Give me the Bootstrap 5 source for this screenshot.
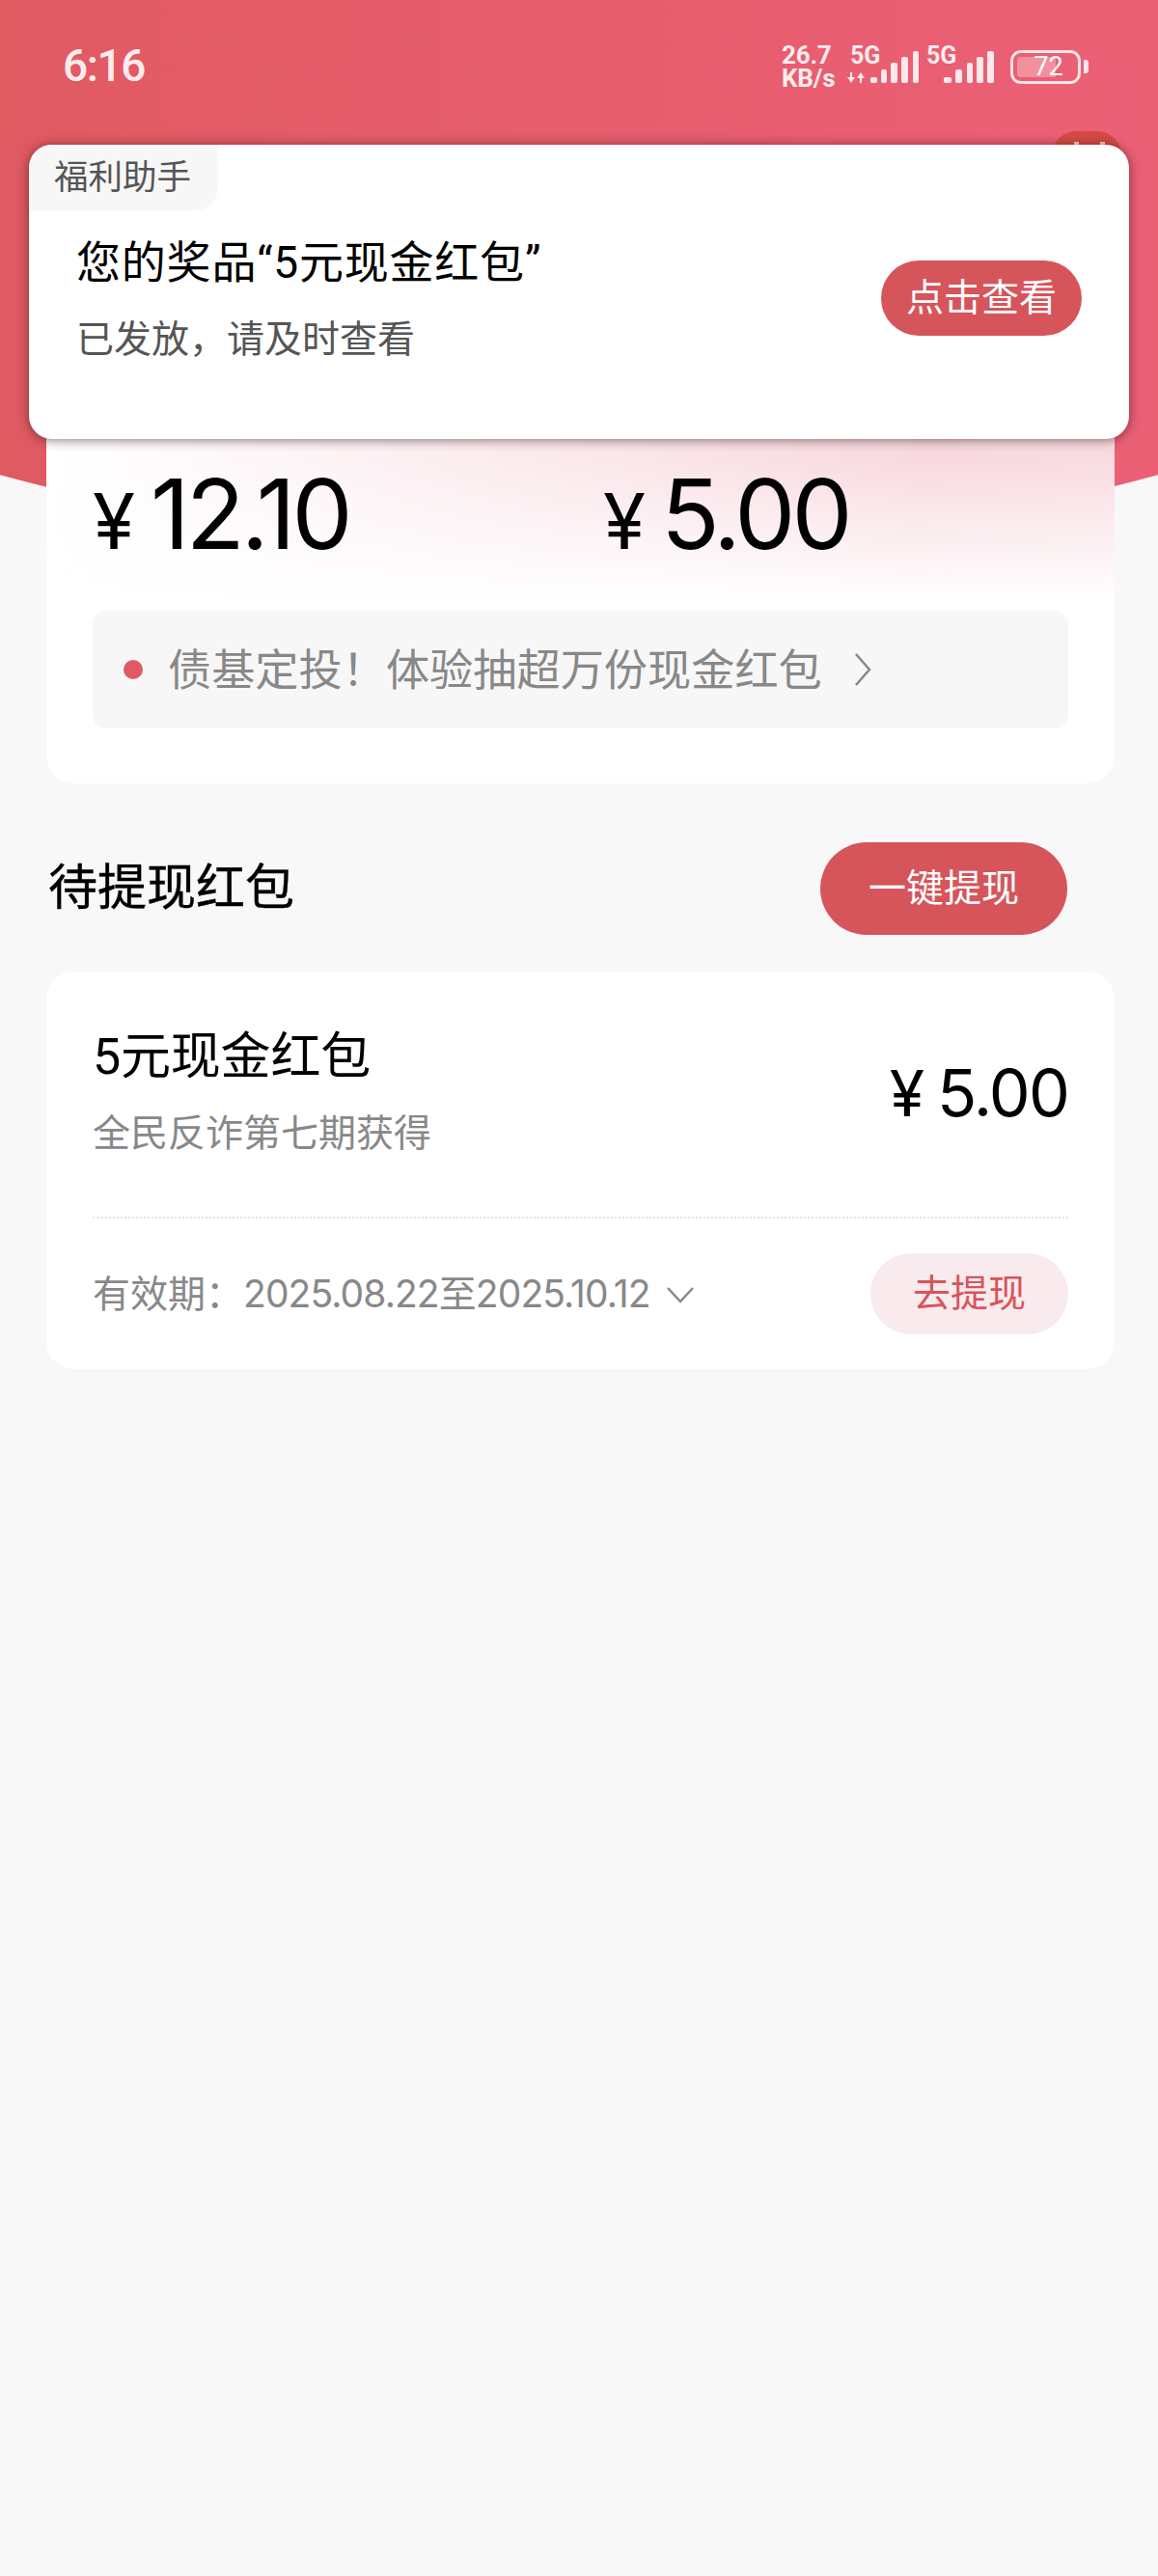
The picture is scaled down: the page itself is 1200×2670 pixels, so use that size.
<!DOCTYPE html>
<html lang="zh-CN">
<head>
  <meta charset="UTF-8" />
  <meta name="viewport" content="width=device-width, initial-scale=1.0" />
  <title>待提现红包</title>
  <link href="https://cdn.jsdelivr.net/npm/bootstrap@5.3.0/dist/css/bootstrap.min.css" rel="stylesheet">
  <style>
    body { background: #f8f8f8; font-family: Roboto, "Noto Sans CJK SC", sans-serif; }
    .page-wrap { position: relative; width: 1200px; min-height: 2670px; overflow: hidden; }

    /* red header behind everything */
    .hero-bg { position: absolute; left: 0; top: 0; width: 1200px; height: 560px;
      background: linear-gradient(90deg, #e05a62, #ec6076);
      clip-path: circle(2300px at 600px -1728px); }
    .hidden-badge { position: absolute; left: 1090px; top: 136px; width: 72px; height: 50px;
      border-radius: 25px; background: #d64a45; }
    .hidden-badge i { position: absolute; top: 11px; width: 5px; height: 6px; background: #f6d5d2; }
    .hidden-badge i:first-child { left: 23px; }
    .hidden-badge i:last-child { left: 50px; }

    .status-row { position: relative; height: 136px; padding: 0 72px 0 65px; color: #fdecee; }
    .clock { font-size: 46px; font-weight: 500; line-height: 1; margin-top: 45px; letter-spacing: -1.4px; }
    .status-icons { position: relative; width: 320px; height: 40px; margin-top: 48px; }
    .net-speed { position: absolute; left: 2px; top: -3px; font-size: 26px; font-weight: 700; line-height: 24px; letter-spacing: -.2px; }
    .net-tag { position: absolute; top: -2px; font-size: 25px; font-weight: 700; line-height: 24px; letter-spacing: -.2px; }
    .batt-box { position: absolute; left: 239px; top: 4px; width: 73px; height: 35px; border: 3px solid #fde3e7; border-radius: 11px; }
    .batt-fill { position: absolute; left: 4px; top: 4px; bottom: 4px; width: 40px; background: #f2909e; border-radius: 4px 0 0 4px; }
    .batt-num { position: absolute; left: 6px; right: 0; top: 1px; text-align: center; font-size: 27px; line-height: 27px; color: #fff; }
    .batt-nib { position: absolute; left: 315px; top: 14px; width: 5px; height: 14px; background: #fde3e7; border-radius: 0 3px 3px 0; }

    /* notification */
    .notice-pop { position: absolute; left: 30px; top: 150px; width: 1140px; height: 305px; background: #fff;
      border-radius: 24px; box-shadow: 0 1px 12px rgba(50, 20, 20, .6); overflow: hidden; z-index: 5; }
    .notice-tag { width: 196px; height: 68px; padding: 14px 0 0 26px; background: #f7f7f7; border-bottom-right-radius: 24px;
      font-size: 35.5px; line-height: 40px; color: #555; }
    .notice-title { position: absolute; left: 49px; top: 94px; font-size: 46px; line-height: 56px; color: #000; letter-spacing: .8px; }
    .notice-sub { position: absolute; left: 49px; top: 176px; font-size: 39px; line-height: 52px; color: #555; }
    .notice-btn { position: absolute; left: 883px; top: 120px; width: 208px; height: 78px; }

    .red-btn { background: #d6555b; color: #fff; border: 0; padding: 0; font-size: 39px; line-height: 1; }
    .red-btn:hover { background: #d6555b; color: #fff; }

    /* cards */
    .sheet { position: relative; margin: 0 45px 0 48px; border: 0; border-radius: 28px; background: #fff; }
    .sheet-top { margin-top: 264px; height: 412px; padding: 0 48px;
      background: linear-gradient(180deg, rgba(255,255,255,0) 70px, #fff 225px),
                  linear-gradient(100deg, #fff 2%, #f8d8de 78%, #f8dbe1 100%); }
    .amount-line { height: 233px; padding-top: 83px; font-family: Inter, Roboto, sans-serif; }
    .amount-cell { flex: none; width: 529px; }
    .yen-big { font-size: 80px; line-height: 100px; margin-right: 16px; color: #000; }
    .num-big { font-size: 100px; line-height: 100px; letter-spacing: -4px; color: #000; }
    .promo-bar { height: 122px; background: #f7f7f7; border-radius: 14px; padding-left: 32px; color: #888; font-size: 45.2px; }
    .promo-text { padding-top: 4px; }
    .promo-dot { width: 20px; height: 20px; border-radius: 50%; background: #e05a66; margin-right: 26px; }
    .promo-chev { margin-left: 30px; }

    .section-head { margin: 61px 94px 38px 50px; }
    .section-title { font-size: 51px; line-height: 60px; color: #000; margin: 0; font-weight: 400; -webkit-text-stroke: .4px #000; }
    .section-btn { width: 256px; height: 96px; }

    .sheet-item { height: 412px; padding: 0 48px; }
    .item-top { height: 256px; padding-top: 57px; border-bottom: 2px dotted #e4e4e4; }
    .item-name { font-size: 52px; line-height: 64px; color: #000; letter-spacing: -.2px; }
    .item-src { font-size: 39px; line-height: 52px; color: #888; margin-top: 21px; }
    .item-amt { margin-top: 33px; color: #000; line-height: 70px; font-family: Inter, Roboto, sans-serif; }
    .yen-mid { font-size: 66px; margin-right: 13px; }
    .num-mid { font-size: 68px; letter-spacing: -1.8px; }
    .item-bottom { height: 154px; padding-top: 36px; }
    .item-date { font-size: 39px; line-height: 84px; color: #888; }
    .date-nums { font-family: Inter, Roboto, "Noto Sans CJK SC", sans-serif; letter-spacing: -.9px; }
    .pale-btn { width: 205px; height: 84px; background: #f9eaed; color: #d6555b; border: 0; padding: 0; font-size: 39px; line-height: 1; }
    .pale-btn:hover { background: #f9eaed; color: #d6555b; }
  </style>
</head>
<body>
  <div class="page-wrap">
    <div class="hero-bg"></div>
    <div class="hidden-badge"><i></i><i></i></div>

    <div class="status-row d-flex justify-content-between align-items-start">
      <div class="clock">6:16</div>
      <div class="status-icons">
        <div class="net-speed">26.7<br>KB/s</div>
        <span class="net-tag" style="left:73px">5G</span>
        <svg width="90" height="42" viewBox="0 0 90 42" style="position:absolute;left:70px;top:0" fill="#fde8ec">
          <path d="M3 27h2v5h3l-4 6-4-6h3zM14 27l4 6h-3v5h-2v-5h-3z"/>
          <rect x="24" y="32" width="7" height="6" rx="2"/>
          <rect x="35" y="24" width="6" height="14" rx="2"/>
          <rect x="45" y="17" width="7" height="21" rx="2"/>
          <rect x="56" y="11" width="7" height="27" rx="2"/>
          <rect x="68" y="5" width="6" height="33" rx="2"/>
        </svg>
        <span class="net-tag" style="left:152px">5G</span>
        <svg width="60" height="42" viewBox="0 0 60 42" style="position:absolute;left:170px;top:0" fill="#fde8ec">
          <rect x="0" y="32" width="8" height="6" rx="2"/>
          <rect x="12" y="24" width="7" height="14" rx="2"/>
          <rect x="24" y="17" width="6" height="21" rx="2"/>
          <rect x="34" y="11" width="7" height="27" rx="2"/>
          <rect x="45" y="5" width="7" height="33" rx="2"/>
        </svg>
        <div class="batt-box"><div class="batt-fill"></div><div class="batt-num">72</div></div>
        <div class="batt-nib"></div>
      </div>
    </div>

    <div class="notice-pop">
      <div class="notice-tag">福利助手</div>
      <div class="notice-title">您的奖品“5元现金红包”</div>
      <div class="notice-sub">已发放，请及时查看</div>
      <button class="btn red-btn rounded-pill notice-btn">点击查看</button>
    </div>

    <div class="card sheet sheet-top">
      <div class="amount-line d-flex">
        <div class="amount-cell d-flex align-items-baseline"><span class="yen-big">¥</span><span class="num-big">12.10</span></div>
        <div class="d-flex align-items-baseline"><span class="yen-big">¥</span><span class="num-big">5.00</span></div>
      </div>
      <div class="promo-bar d-flex align-items-center">
        <span class="promo-dot"></span>
        <span class="promo-text">债基定投！体验抽超万份现金红包</span>
        <svg class="promo-chev" width="24" height="38" viewBox="0 0 24 38" fill="none" stroke="#888" stroke-width="2.5"><path d="M5 3l14 16L5 35"/></svg>
      </div>
    </div>

    <div class="section-head d-flex justify-content-between align-items-center">
      <h2 class="section-title">待提现红包</h2>
      <button class="btn red-btn rounded-pill section-btn">一键提现</button>
    </div>

    <div class="card sheet sheet-item">
      <div class="item-top d-flex justify-content-between align-items-start">
        <div>
          <div class="item-name">5元现金红包</div>
          <div class="item-src">全民反诈第七期获得</div>
        </div>
        <div class="item-amt d-flex align-items-baseline"><span class="yen-mid">¥</span><span class="num-mid">5.00</span></div>
      </div>
      <div class="item-bottom d-flex justify-content-between align-items-start">
        <div class="item-date d-flex align-items-center">
          <span>有效期：<span class="date-nums">2025.08.22至2025.10.12</span></span>
          <svg class="ms-3" width="30" height="20" viewBox="0 0 30 20" fill="none" stroke="#888" stroke-width="2.5"><path d="M2 3l13 14L28 3"/></svg>
        </div>
        <button class="btn pale-btn rounded-pill">去提现</button>
      </div>
    </div>
  </div>

  <script src="https://cdn.jsdelivr.net/npm/bootstrap@5.3.0/dist/js/bootstrap.bundle.min.js"></script>
</body>
</html>
